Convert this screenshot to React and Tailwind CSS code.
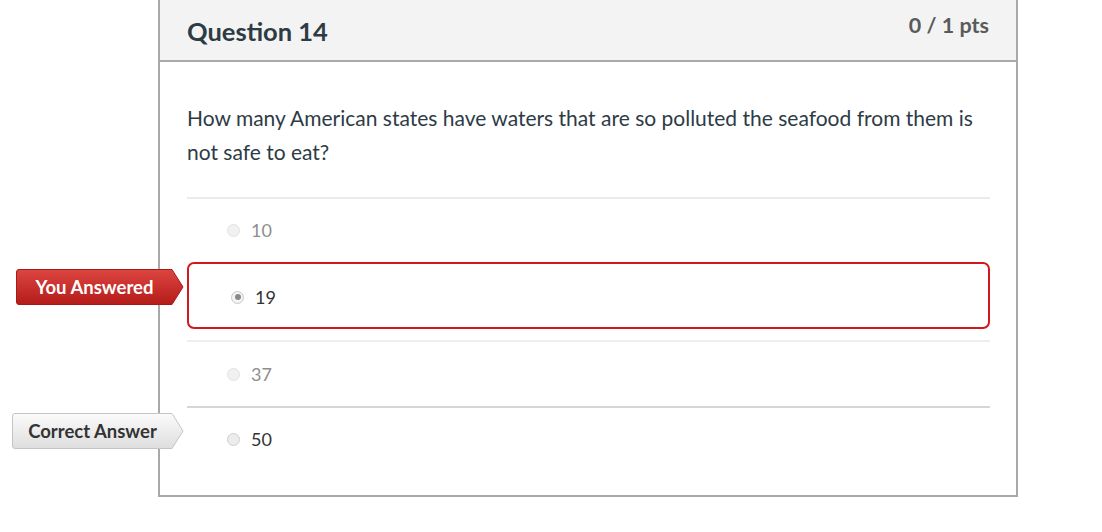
import React from "react";

function Radio({ checked, faded }) {
  if (checked) {
    return (
      <span className="w-[13px] h-[13px] rounded-full border border-[#c8c8c8] bg-[#f4f4f4] flex items-center justify-center shrink-0">
        <span className="w-[6px] h-[6px] rounded-full bg-[#8a8a8a]" />
      </span>
    );
  }
  return (
    <span
      className={
        "w-[13px] h-[13px] rounded-full border shrink-0 " +
        (faded ? "border-[#e2e2e2] bg-[#f1f1f1]" : "border-[#cfcfcf] bg-[#ececec]")
      }
    />
  );
}

function RedTag() {
  return (
    <div className="absolute left-[-173px] top-[5px] w-[168px] h-[36px]">
      <svg width="168" height="36" viewBox="0 0 168 36" className="absolute inset-0">
        <defs>
          <linearGradient id="rg" x1="0" y1="0" x2="0" y2="1">
            <stop offset="0" stopColor="#dc4540" />
            <stop offset="1" stopColor="#b41c1a" />
          </linearGradient>
        </defs>
        <path d="M3,0.5 H156 L167,18 L156,35.5 H3 Q0.5,35.5 0.5,33 V3 Q0.5,0.5 3,0.5 Z" fill="url(#rg)" stroke="#a8191a" strokeWidth="1" />
      </svg>
      <div className="relative w-[157px] h-[36px] flex items-center justify-center text-white font-bold text-[18.5px] leading-none">
        You Answered
      </div>
    </div>
  );
}

function GrayTag() {
  return (
    <div className="absolute left-[-175px] top-[5px] w-[172px] h-[36px]">
      <svg width="172" height="36" viewBox="0 0 172 36" className="absolute inset-0">
        <defs>
          <linearGradient id="gg" x1="0" y1="0" x2="0" y2="1">
            <stop offset="0" stopColor="#fbfbfb" />
            <stop offset="1" stopColor="#dedede" />
          </linearGradient>
        </defs>
        <path d="M3,0.5 H160 L171,18 L160,35.5 H3 Q0.5,35.5 0.5,33 V3 Q0.5,0.5 3,0.5 Z" fill="url(#gg)" stroke="#c4c4c4" strokeWidth="1" />
      </svg>
      <div className="relative w-[161px] h-[36px] flex items-center justify-center text-[#333] font-bold text-[18.5px] leading-none">
        Correct Answer
      </div>
    </div>
  );
}

export default function App() {
  return (
    <div
      className="w-[1102px] h-[532px] bg-white overflow-hidden"
      style={{ fontFamily: "Lato, 'Noto Sans', sans-serif" }}
    >
      <div className="ml-[158px] w-[860px] border-x-2 border-b-2 border-[#a9a9a9]">
        <div className="h-[62px] bg-[#f3f3f3] border-b-2 border-[#a9a9a9] flex justify-between px-[27px]">
          <div className="pt-[15px] text-[25.5px] font-bold text-[#2d3b45] leading-[32px]">Question 14</div>
          <div className="pt-[11px] text-[21.5px] font-bold text-[#5a5a5a] leading-[28px]">0 / 1 pts</div>
        </div>
        <div className="px-[26px] pl-[27px] pt-[39px] pb-[25px]">
          <p className="text-[21px] leading-[34px] text-[#2d3b45]">
            How many American states have waters that are so polluted the seafood from them is not safe to eat?
          </p>
          <div className="mt-[28px] border-t-2 border-[#ebebeb]" />
          <div className="h-[63px] flex items-center pl-[40px] gap-[11px] text-[18px] text-[#8e8e8e]">
            <Radio faded />
            <span>10</span>
          </div>
          <div className="relative h-[67px] pt-[3px] border-2 border-[#d3171e] rounded-[7px] flex items-center pl-[42px] gap-[11px] text-[18px] text-[#333]">
            <Radio checked />
            <span>19</span>
            <RedTag />
          </div>
          <div className="mt-[11px] border-t-2 border-[#eeeeee]" />
          <div className="h-[64px] flex items-center pl-[40px] gap-[11px] text-[18px] text-[#8e8e8e]">
            <Radio faded />
            <span>37</span>
          </div>
          <div className="border-t-2 border-[#d6d6d6]" />
          <div className="relative h-[62px] flex items-center pl-[40px] gap-[11px] text-[18px] text-[#333]">
            <Radio />
            <span>50</span>
            <GrayTag />
          </div>
        </div>
      </div>
    </div>
  );
}
